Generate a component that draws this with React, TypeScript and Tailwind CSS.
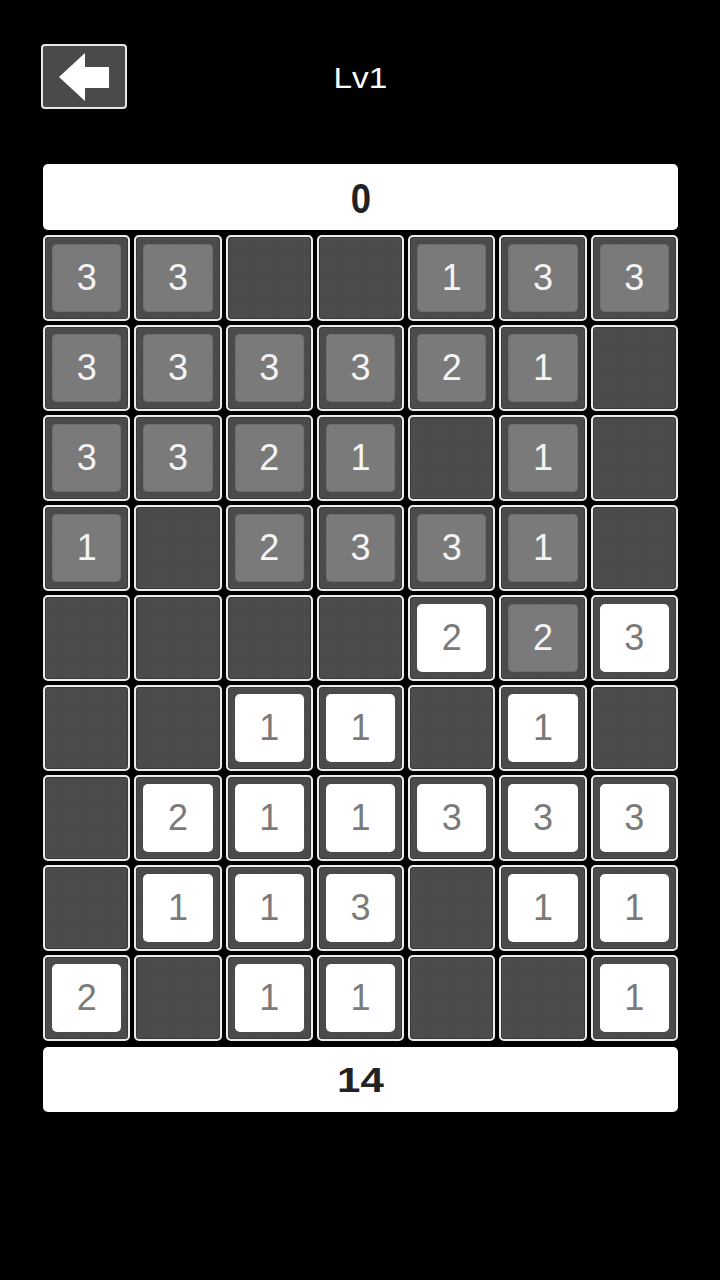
import React from "react";

type Cell = { k: "g" | "w" | "e"; n?: number };

const rows: string[] = [
  "g3 g3 e e g1 g3 g3",
  "g3 g3 g3 g3 g2 g1 e",
  "g3 g3 g2 g1 e g1 e",
  "g1 e g2 g3 g3 g1 e",
  "e e e e w2 g2 w3",
  "e e w1 w1 e w1 e",
  "e w2 w1 w1 w3 w3 w3",
  "e w1 w1 w3 e w1 w1",
  "w2 e w1 w1 e e w1",
];

const grid: Cell[][] = rows.map((r) =>
  r.split(" ").map((t) =>
    t === "e" ? { k: "e" } : { k: t[0] as "g" | "w", n: Number(t.slice(1)) }
  )
);

function Tile({ c }: { c: Cell }) {
  return (
    <div className="h-[86px] rounded-[5px] border-2 border-[#ececec] bg-[#4a4a4a] bg-[radial-gradient(#525252_0.8px,transparent_0.8px)] bg-[length:3px_3px] shadow-[inset_0_0_0_1px_#3a3a3a] p-[7px] flex">
      {c.k === "g" && (
        <div className="flex-1 rounded-[5px] bg-[#7a7a7a] shadow-[inset_0_0_0_1px_#6e6e6e] flex items-center justify-center text-[#f4f4f4] text-[36px] leading-none">
          {c.n}
        </div>
      )}
      {c.k === "w" && (
        <div className="flex-1 rounded-[5px] bg-white flex items-center justify-center text-[#7a7a7a] text-[36px] leading-none">
          {c.n}
        </div>
      )}
    </div>
  );
}

export default function App() {
  return (
    <div
      className="w-[720px] h-[1280px] bg-black overflow-hidden"
      style={{ fontFamily: '"Liberation Sans", Arial, sans-serif' }}
    >
      <div className="grid grid-cols-[1fr_auto_1fr] items-center pt-[44px] px-[41px]">
        <div>
          <div className="w-[86px] h-[65px] rounded-[4px] border-2 border-[#e6e6e6] bg-[#4a4a4a] flex items-center justify-center">
            <svg width="54" height="50" viewBox="0 0 54 50">
              <path d="M2 25 L28 1 L28 15 L52 15 L52 36 L28 36 L28 49 Z" fill="#ffffff" />
            </svg>
          </div>
        </div>
        <div className="text-white text-[29px] leading-none scale-x-[1.15] mt-[3px]">Lv1</div>
        <div />
      </div>

      <div className="ml-[43px] w-[635px] mt-[55px] flex flex-col">
        <div className="h-[66px] rounded-[5px] bg-white flex items-center justify-center">
          <span className="text-[#222] font-bold text-[43px] leading-none scale-x-[0.85] mt-[2px]">0</span>
        </div>
        <div className="mt-[5px] grid grid-cols-7 gap-x-[4px] gap-y-[4px]">
          {grid.flat().map((c, i) => (
            <Tile key={i} c={c} />
          ))}
        </div>
        <div className="mt-[6px] h-[65px] rounded-[5px] bg-white flex items-center justify-center">
          <span className="text-[#222] font-bold text-[35px] leading-none scale-x-[1.2]">14</span>
        </div>
      </div>
    </div>
  );
}
